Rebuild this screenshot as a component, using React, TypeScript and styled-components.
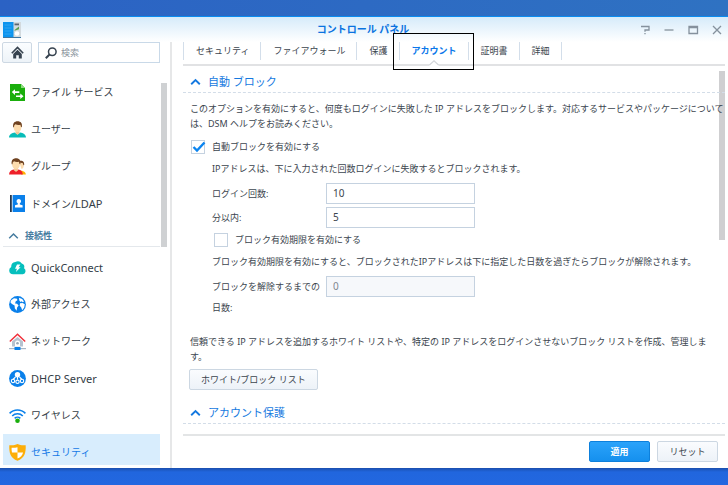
import React from "react";
import styled, { createGlobalStyle, css } from "styled-components";

const GlobalStyle = createGlobalStyle`
  *, *::before, *::after { box-sizing: border-box; }
  body {
    margin: 0;
    font-family: "Noto Sans", "Noto Sans CJK JP", sans-serif;
    font-size: 9px;
    line-height: 15px;
    color: #3b454e;
  }
  button, input { font: inherit; color: inherit; margin: 0; }
  h1, h2, p, ul { margin: 0; padding: 0; font-size: inherit; font-weight: inherit; }
`;

const Desktop = styled.div`
  height: 100vh;
  display: flex;
  flex-direction: column;
  overflow: hidden;
  padding: 16px 0 17px;
  background:
    linear-gradient(90deg, #2b62c4, #2f72c2) top / 100% 16px no-repeat,
    linear-gradient(180deg, #1b4fae, #2166de 4px, #2267e0) bottom / 100% 17px no-repeat,
    #2a66d0;
`;

const Window = styled.section`
  flex: 1;
  min-height: 0;
  display: flex;
  flex-direction: column;
  border-top: 1px solid #0a8cf0;
  background: linear-gradient(180deg, #d6ebfa, #ffffff 25px);
`;

const TitleBar = styled.header`
  display: grid;
  grid-template-columns: 1fr auto 1fr;
  align-items: center;
  flex: none;
  height: 25px;
  padding: 0 5px 0 3px;
`;

const Title = styled.h1`
  && { font-size: 10px; font-weight: 700; }
  color: #0b73e0;
`;

const WindowControls = styled.div`
  display: flex;
  justify-content: flex-end;
  gap: 12px;
`;

const ControlButton = styled.button`
  width: 12px;
  height: 12px;
  padding: 0;
  border: 0;
  background: none;
  svg { display: block; }
`;

const Body = styled.div`
  flex: 1;
  min-height: 0;
  display: flex;
`;

const Sidebar = styled.aside`
  flex: none;
  width: 172px;
  display: flex;
  flex-direction: column;
  border-right: 2px solid #e6e7e8;
`;

const SearchRow = styled.div`
  display: flex;
  gap: 6px;
  padding: 0 10px 0 2px;
`;

const HomeButton = styled.button`
  flex: none;
  display: grid;
  place-items: center;
  width: 30px;
  height: 21px;
  padding: 0;
  border: 1px solid #cdd8e3;
  border-radius: 2px;
  background: linear-gradient(#fbfdff, #edf3f8);
`;

const SearchBox = styled.label`
  flex: 1;
  min-width: 0;
  display: flex;
  align-items: center;
  gap: 4px;
  height: 21px;
  padding-left: 6px;
  border: 1px solid #c9d9e8;
  background: #fff;
  svg { flex: none; }
`;

const SearchInput = styled.input`
  flex: 1;
  min-width: 0;
  padding: 0;
  border: 0;
  outline: 0;
  background: none;
  &::placeholder { color: #8a939c; opacity: 1; }
`;

const MenuArea = styled.div`
  flex: 1;
  min-height: 0;
  display: flex;
  gap: 1px;
  overflow: hidden;
  margin: 11px 3px 3px 3px;
`;

const Menu = styled.nav`
  flex: 1;
  min-width: 0;
`;

const MenuScroll = styled.div`
  flex: none;
  width: 6px;
  height: 164px;
  margin-top: 9px;
  background: #cfd1d3;
`;

const MenuItem = styled.a<{ $active?: boolean }>`
  display: flex;
  align-items: center;
  gap: 5px;
  height: 37px;
  padding-left: 6px;
  font-size: 10px;
  text-decoration: none;
  white-space: nowrap;
  color: ${(p) => (p.$active ? "#1579e6" : "#343d46")};
  background: ${(p) => (p.$active ? "#d8edfd" : "transparent")};
  svg { flex: none; }
`;

const Latin = styled.span`
  font-size: 11px;
`;

const MenuGroup = styled.button`
  display: flex;
  align-items: center;
  gap: 6px;
  width: 100%;
  height: 25px;
  padding: 3px 0 0 5px;
  margin-bottom: 2px;
  border: 0;
  border-bottom: 1px solid #e4e8ec;
  background: none;
  font-weight: 700;
  color: #457b9f;
`;

const Main = styled.main`
  flex: 1;
  min-width: 0;
  display: flex;
  flex-direction: column;
  padding-left: 11px;
`;

const TabBar = styled.nav`
  flex: none;
  display: flex;
  height: 24px;
  margin-right: 3px;
  padding-bottom: 4px;
  border-bottom: 2px solid #e1e2e4;
`;

const Tab = styled.a<{ $active?: boolean }>`
  position: relative;
  height: 18px;
  padding: 0 11px 0 12px;
  border-left: 1px solid #d3deea;
  line-height: 17px;
  color: inherit;
  text-decoration: none;
  white-space: nowrap;
  &:last-child { border-right: 1px solid #d3deea; }
  ${(p) =>
    p.$active &&
    css`
      font-weight: 700;
      color: #0b78ea;
    `}
`;

const TabHighlight = styled.span`
  position: absolute;
  inset: -9px -6px -10px -7px;
  border: 1px solid #000;
`;

const TabNotch = styled.svg`
  position: absolute;
  left: 50%;
  bottom: -6px;
  margin-left: -5px;
`;

const ScrollArea = styled.div`
  position: relative;
  isolation: isolate;
  flex: 1;
  min-height: 0;
  overflow: hidden;
  margin-right: 3px;
`;

const ContentScroll = styled.div`
  position: absolute;
  z-index: -1;
  top: 5px;
  right: 0;
  width: 6px;
  height: 169px;
  background: #cfcfd1;
`;

const SectionHeading = styled.h2`
  margin-top: 5px;
  border-bottom: 1px dashed #d3dde8;
  button {
    display: flex;
    align-items: center;
    gap: 7px;
    height: 21px;
    padding: 0 0 0 7px;
    border: 0;
    background: none;
    font-size: 11px;
    color: #1579e0;
  }
`;

const Paragraph = styled.p`
  && { padding-left: 7px; }
`;

const Intro = styled(Paragraph)`
  && { margin-top: 8px; }
`;

const ListNote = styled(Paragraph)`
  && { margin: 16px 0 5px; padding-right: 10px; }
`;

const Indented = styled.div`
  padding-left: 29px;
`;

const CheckRow = styled.label<{ $nested?: boolean }>`
  display: flex;
  align-items: center;
  gap: 7px;
  height: 23px;
  margin-top: ${(p) => (p.$nested ? 0 : 4)}px;
  padding-left: ${(p) => (p.$nested ? 2 : 8)}px;
`;

const Checkbox = styled.input`
  appearance: none;
  width: 14px;
  height: 14px;
  border: 1px solid #c5d2e0;
  background: #fff;
`;

const CheckHolder = styled.span`
  position: relative;
  display: flex;
  svg { position: absolute; left: 1px; top: 1px; pointer-events: none; opacity: 0; }
  input:checked + svg { opacity: 1; }
`;

const Info = styled.p`
  && { line-height: 22px; }
`;

const Field = styled.div`
  display: grid;
  grid-template-columns: 114px 149px;
  align-items: start;
  margin-top: 3px;
  line-height: 21px;
`;

const TextInput = styled.input`
  width: 100%;
  height: 21px;
  padding: 0 6px;
  border: 1px solid #c5d2e0;
  background: #fff;
  font-size: 10px;
  &:disabled { background: #f6f8fb; color: #7e8790; }
`;

const Button = styled.button<{ $primary?: boolean }>`
  height: 21px;
  padding: 0 11px;
  border: 1px solid #ccd7e2;
  border-radius: 2px;
  background: linear-gradient(#fafcfe, #edf2f8);
  white-space: nowrap;
  ${(p) =>
    p.$primary &&
    css`
      border-color: #0d80dc;
      background: linear-gradient(#2ba3fa, #1590ee);
      color: #fff;
      font-weight: 700;
    `}
`;

const ListButton = styled(Button)`
  display: block;
  min-width: 128px;
  margin: 0 0 12px 6px;
`;

const Footer = styled.footer`
  flex: none;
  display: flex;
  justify-content: flex-end;
  gap: 7px;
  height: 34px;
  margin-right: 3px;
  padding: 5px 7px 0 0;
  border-top: 2px solid #e3e5e6;
  ${Button} { width: 61px; padding: 0; }
`;

const Chevron = ({ color, width = 1.5 }: { color: string; width?: number }) => (
  <svg width="11" height="8" viewBox="0 0 11 8" fill="none" stroke={color} strokeWidth={width} aria-hidden="true">
    <path d="M1.2 6.2 5.5 2l4.3 4.2" />
  </svg>
);

const Icon = ({ children }: { children: React.ReactNode }) => (
  <svg width="17" height="17" viewBox="0 0 17 17" aria-hidden="true">
    {children}
  </svg>
);

const FileIcon = () => (
  <Icon>
    <path d="M1 0h11l4 4v13H1z" fill="#1aae0c" />
    <path d="M12 0v4h4z" fill="#8fdb80" />
    <path d="M2.800 8 6 5.200v2h4.300v1.700H6V11zM14.500 12.200l-3.200-2.800v2H7v1.700h4.300v2z" fill="#fff" />
  </Icon>
);

const Head = ({ x = 0 }: { x?: number }) => (
  <g transform={`translate(${x} 0)`}>
    <path d="M6.6 9h3.8v3.4l-1.9 1.4-1.9-1.4z" fill="#f2c896" />
    <path d="M4.7 3.3h7.6v3.6c0 2.3-1.8 4.1-3.8 4.1S4.7 9.200 4.7 6.900z" fill="#fddcae" />
    <path d="M4.200 6.300C3.600 2.300 5.500.3 8.600.3s5 2 4.200 6l-.8-.2-.6-2.300c-2 .5-3.800.2-4.900-.6L5.200 4.600 5 6.200z" fill="#6f4220" />
  </g>
);

const UserIcon = () => (
  <Icon>
    <path d="M0 16.500c.2-3.300 2.600-4.400 6-5l2.500 2 2.500-2c3.400.6 5.800 1.700 6 5z" fill="#08bcb8" />
    <Head />
  </Icon>
);

const GroupIcon = () => (
  <Icon>
    <path d="M11 12.500c3 .4 5.500 1 5.900 4H12z" fill="#ffb000" />
    <path d="M10.500 4.500h4.200v3.200c0 2-1 3.100-2.400 3.100z" fill="#fddcae" />
    <path d="M9.500 4.200C10 2.300 15.600 1.200 15.200 7l-.8.3-.5-2z" fill="#6f4220" />
    <path d="M0 16.500c.2-3.300 1.900-4.400 5-5l2 2 2-2c3.200.6 4.600 1.700 4.800 5z" fill="#ee2029" />
    <Head x={-1.5} />
  </Icon>
);

const DomainIcon = () => (
  <Icon>
    <path d="M1 0h1.800v17H1z" fill="#25364b" />
    <path d="M3.600 0H16v17H3.600z" fill="#0a80ea" />
    <path d="M9.800 4a2.200 2.200 0 0 1 1 4.200v1.200l2.800.8V12.500H6v-2.300l2.800-.8V8.200a2.200 2.200 0 0 1 1-4.200z" fill="#fff" />
  </Icon>
);

const CloudIcon = () => (
  <Icon>
    <path d="M4.300 15.300A4 4 0 0 1 .2 11.500a3.800 3.800 0 0 1 2-3.600A4.800 4.800 0 0 1 6.300 3a5 5 0 0 1 6.500 1.600 3.700 3.700 0 0 1 2.300 4.600 3.400 3.400 0 0 1-1.200 6.100z" fill="#06bfbd" />
    <path d="M8 5.500h3.400L9.600 8.200h2L6.900 13l1-3.300H6z" fill="#fff" />
  </Icon>
);

const GlobeIcon = () => (
  <Icon>
    <circle cx="8.500" cy="8.500" r="8.400" fill="#0a80ea" />
    <path d="M1.800 4.500 5 2.200l3 .5.4 1.600-1.800 1.300-.5 1.800 2 .4 1.500 1.700-1.500 2-.5 3.200-1.800-2.500-.2-2.700L3 8 1.500 6.500z" fill="#fff" />
    <path d="m10 1.800 3.200 1.200 1.800 2.500-1.300.8-1-1-1.200.8-1.200-1.500zM11 7.300l2.500-.3 2.300 1.300-.6 3.200-2 2.700-1-2.700-1.500-1.700z" fill="#fff" />
  </Icon>
);

const NetworkIcon = () => (
  <Icon>
    <path d="M3 8.500 8.500 4l5.500 4.500v5H3z" fill="#b6c2cf" />
    <path d="M6 13.500V10a2.500 2.500 0 0 1 5 0v3.500z" fill="#fff" />
    <circle cx="8.500" cy="10.300" r="1.300" fill="#98a7b6" />
    <path d="M.8 8.500 8.500 1.300l7.700 7.200" fill="none" stroke="#f0303b" strokeWidth="1.500" />
    <path d="M0 15h17v1.200H0z" fill="#a7b6c6" />
    <path d="M5.500 14h6v3h-6z" fill="#0a80ea" />
  </Icon>
);

const DhcpIcon = () => (
  <Icon>
    <circle cx="8.500" cy="8.500" r="8.400" fill="#0a80ea" />
    <circle cx="8.500" cy="4.800" r="2.700" fill="#fff" />
    <g fill="none" stroke="#fff" strokeWidth="1.100">
      <path d="M8.500 7v2.500M6.500 7 4 9.500M10.500 7 13 9.500" />
      <circle cx="4" cy="11" r="1.700" />
      <circle cx="8.500" cy="11.800" r="1.700" />
      <circle cx="13" cy="11" r="1.700" />
    </g>
  </Icon>
);

const WifiIcon = () => (
  <Icon>
    <g fill="none" stroke="#0a80ea" strokeWidth="1.600">
      <path d="M.6 6.400a11 11 0 0 1 15.800 0M3.200 9a7.400 7.400 0 0 1 10.600 0M5.700 11.400a4 4 0 0 1 5.600 0" />
    </g>
    <circle cx="8.500" cy="13.800" r="2.300" fill="#1aae0c" />
  </Icon>
);

const ShieldIcon = () => (
  <Icon>
    <path d="M8.500 0c2.500 1.300 5 1.500 8.200 1.200.3 7.800-1.200 12.800-8.200 15.600C1.500 14 0 9 .3 1.200 3.500 1.500 6 1.300 8.500 0z" fill="#fdae09" />
    <path d="M8.500 3.200V8.500H3C2.600 7 2.500 5.300 2.600 3.800c2.200.1 4-.1 5.900-.6zM8.500 8.500h5.600c-.8 2.900-2.500 4.800-5.600 6z" fill="#fff" />
  </Icon>
);

const AppIcon = () => (
  <svg width="18" height="16" viewBox="0 0 18 16" aria-hidden="true">
    <path d="M10 0h8v15h-8z" fill="#d3dade" />
    <path d="M0 0h10.500v15H0z" fill="#0b94ef" />
    <path d="M1.500 3h7M1.500 6h7M1.500 9h7M1.500 12h7" stroke="#3aa9f3" strokeWidth=".8" />
    <path d="M11.500 1.500h4.500v1.800h-4.500z" fill="#5b6670" />
    <path d="m11.500 8 4.500-3.500v2.700l-4.500 1.600z" fill="#5a9e4e" />
    <circle cx="14" cy="11.500" r="2.300" fill="#fff" />
    <path d="M0 15h18v1H0z" fill="#3d77a3" />
  </svg>
);

const menuTop = [
  { label: "ファイル サービス", icon: <FileIcon /> },
  { label: "ユーザー", icon: <UserIcon /> },
  { label: "グループ", icon: <GroupIcon /> },
  { label: "ドメイン", latin: "/LDAP", icon: <DomainIcon /> },
];

const menuConnectivity = [
  { latin: "QuickConnect", icon: <CloudIcon /> },
  { label: "外部アクセス", icon: <GlobeIcon /> },
  { label: "ネットワーク", icon: <NetworkIcon /> },
  { latin: "DHCP Server", icon: <DhcpIcon /> },
  { label: "ワイヤレス", icon: <WifiIcon /> },
  { label: "セキュリティ", icon: <ShieldIcon />, active: true },
];

type Entry = { label?: string; latin?: string; icon: React.ReactNode; active?: boolean };

const MenuEntry = ({ label, latin, icon, active }: Entry) => (
  <MenuItem href="#" $active={active}>
    {icon}
    <span>
      {label}
      {latin && <Latin>{latin}</Latin>}
    </span>
  </MenuItem>
);

const tabs = ["セキュリティ", "ファイアウォール", "保護", "アカウント", "証明書", "詳細"];

const controls = [
  { label: "ヘルプ", d: "M2 2.500h8v3.500H6v1.800M6 9v1.300" },
  { label: "最小化", d: "M1.500 6h9" },
  { label: "最大化", d: "M2 2.500h8.500v7H2zM2 3.600h8.500" },
  { label: "閉じる", d: "m2 2 8 8m0-8-8 8" },
];

export default function App() {
  return (
    <>
      <GlobalStyle />
      <Desktop lang="ja">
        <Window>
          <TitleBar>
            <AppIcon />
            <Title>コントロール パネル</Title>
            <WindowControls>
              {controls.map((c) => (
                <ControlButton key={c.label} aria-label={c.label}>
                  <svg width="12" height="12" viewBox="0 0 12 12" fill="none" stroke="#85919d" strokeWidth="1.300">
                    <path d={c.d} />
                  </svg>
                </ControlButton>
              ))}
            </WindowControls>
          </TitleBar>
          <Body>
            <Sidebar>
              <SearchRow>
                <HomeButton aria-label="ホーム">
                  <svg width="13" height="13" viewBox="0 0 13 13" aria-hidden="true">
                    <path d="M.8 7.200 6.500 1.500l5.700 5.700" fill="none" stroke="#36424f" strokeWidth="1.600" />
                    <path d="M2.200 7.900 6.500 3.700l4.300 4.200v4.600H7.800V9.300H5.200v3.200h-3z" fill="#36424f" />
                  </svg>
                </HomeButton>
                <SearchBox>
                  <svg width="12" height="12" viewBox="0 0 12 12" fill="none" stroke="#36424f" aria-hidden="true">
                    <circle cx="7.300" cy="4.700" r="3.800" strokeWidth="1.500" />
                    <path d="M4.500 7.500.8 11.200" strokeWidth="2" />
                  </svg>
                  <SearchInput type="text" placeholder="検索" aria-label="検索" />
                </SearchBox>
              </SearchRow>
              <MenuArea>
                <Menu>
                  {menuTop.map((m, i) => (
                    <MenuEntry key={i} {...m} />
                  ))}
                  <MenuGroup>
                    <Chevron color="#457b9f" />
                    接続性
                  </MenuGroup>
                  {menuConnectivity.map((m, i) => (
                    <MenuEntry key={i} {...m} />
                  ))}
                </Menu>
                <MenuScroll />
              </MenuArea>
            </Sidebar>
            <Main>
              <TabBar>
                {tabs.map((t) => {
                  const active = t === "アカウント";
                  return (
                    <Tab key={t} href="#" $active={active}>
                      {t}
                      {active && (
                        <>
                          <TabNotch width="10" height="6" viewBox="0 0 10 6" aria-hidden="true">
                            <path d="M0 6 5 0l5 6z" fill="#fff" />
                            <path d="M.5 5 5 .8 9.500 5" fill="none" stroke="#d3d6da" strokeWidth="1.200" />
                          </TabNotch>
                          <TabHighlight />
                        </>
                      )}
                    </Tab>
                  );
                })}
              </TabBar>
              <ScrollArea>
                <SectionHeading>
                  <button>
                    <Chevron color="#1579e0" width={1.9} />
                    自動 ブロック
                  </button>
                </SectionHeading>
                <Intro>
                  このオプションを有効にすると、何度もログインに失敗した IP アドレスをブロックします。対応するサービスやパッケージについては、DSM ヘルプをお読みください。
                </Intro>
                <CheckRow>
                  <CheckHolder>
                    <Checkbox type="checkbox" defaultChecked />
                    <svg width="14" height="12" viewBox="0 0 14 12" aria-hidden="true">
                      <path d="M1.500 6 5 9.500l7.500-8" fill="none" stroke="#0a84f0" strokeWidth="2.400" />
                    </svg>
                  </CheckHolder>
                  自動ブロックを有効にする
                </CheckRow>
                <Indented>
                  <Info>IPアドレスは、下に入力された回数ログインに失敗するとブロックされます。</Info>
                  <Field>
                    <label htmlFor="attempts">ログイン回数:</label>
                    <TextInput id="attempts" type="text" defaultValue="10" />
                  </Field>
                  <Field>
                    <label htmlFor="minutes">分以内:</label>
                    <TextInput id="minutes" type="text" defaultValue="5" />
                  </Field>
                  <CheckRow $nested>
                    <Checkbox type="checkbox" />
                    ブロック有効期限を有効にする
                  </CheckRow>
                  <Info>ブロック有効期限を有効にすると、ブロックされたIPアドレスは下に指定した日数を過ぎたらブロックが解除されます。</Info>
                  <Field>
                    <label htmlFor="days">ブロックを解除するまでの日数:</label>
                    <TextInput id="days" type="text" defaultValue="0" disabled />
                  </Field>
                </Indented>
                <ListNote>
                  信頼できる IP アドレスを追加するホワイト リストや、特定の IP アドレスをログインさせないブロック リストを作成、管理します。
                </ListNote>
                <ListButton>ホワイト/ブロック リスト</ListButton>
                <SectionHeading>
                  <button>
                    <Chevron color="#1579e0" width={1.9} />
                    アカウント保護
                  </button>
                </SectionHeading>
                <ContentScroll />
              </ScrollArea>
              <Footer>
                <Button $primary>適用</Button>
                <Button>リセット</Button>
              </Footer>
            </Main>
          </Body>
        </Window>
      </Desktop>
    </>
  );
}
